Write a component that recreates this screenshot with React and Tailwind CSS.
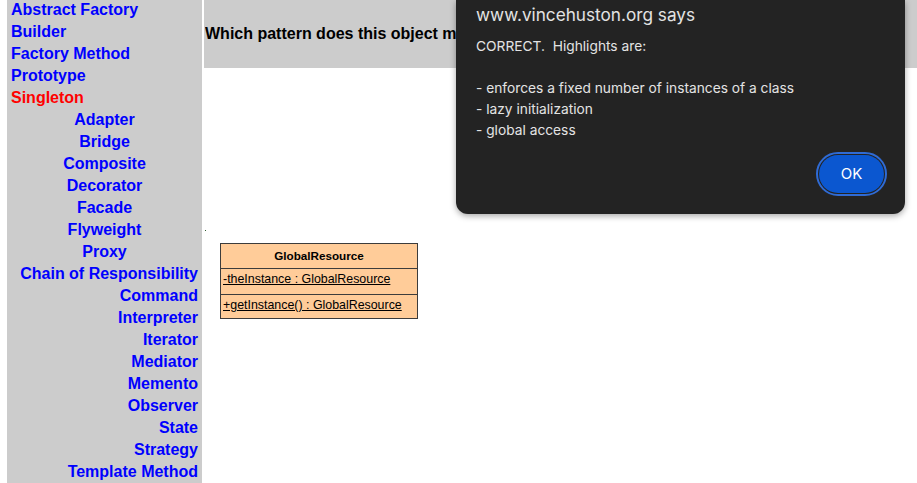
const creational = ["Abstract Factory", "Builder", "Factory Method", "Prototype", "Singleton"];
const structural = ["Adapter", "Bridge", "Composite", "Decorator", "Facade", "Flyweight", "Proxy"];
const behavioral = [
  "Chain of Responsibility",
  "Command",
  "Interpreter",
  "Iterator",
  "Mediator",
  "Memento",
  "Observer",
  "State",
  "Strategy",
  "Template Method",
];

function NavLink({ label, align, active }) {
  return (
    <div className={`h-[22px] leading-[22px] ${align}`}>
      <a href="#" className={`font-bold text-[16px] ${active ? "text-[#ff0000]" : "text-[#0000ff]"}`}>
        {label}
      </a>
    </div>
  );
}

function UmlClass() {
  return (
    <div className="w-[198px] border border-[#3c3c3c] bg-[#ffcc99] text-black" style={{ fontFamily: "Liberation Sans, Arial, sans-serif" }}>
      <div className="h-[25px] flex items-center justify-center font-bold text-[11.7px] border-b border-[#3c3c3c]">GlobalResource</div>
      <div className="h-[26px] pl-[2px] pt-[1px] text-[12.4px] border-b border-[#3c3c3c]">
        <span className="underline">-theInstance : GlobalResource</span>
      </div>
      <div className="h-[23px] pl-[2px] pt-[1px] text-[12.4px]">
        <span className="underline">+getInstance() : GlobalResource</span>
      </div>
    </div>
  );
}

function AlertDialog() {
  return (
    <div
      className="absolute left-[456px] top-0 w-[449px] h-[214px] bg-[#232323] rounded-b-[12px] shadow-[0_2px_6px_rgba(0,0,0,0.35)] text-[#e3e3e3]"
      style={{ fontFamily: "Inter, Roboto, sans-serif" }}
    >
      <div className="pl-[20px] pt-[3px] text-[17.2px] leading-[24px]">www.vincehuston.org says</div>
      <div className="pl-[20px] pt-[9px] text-[13.75px] leading-[21px]">
        <div>CORRECT.&nbsp; Highlights are:</div>
        <div>&nbsp;</div>
        <div>- enforces a fixed number of instances of a class</div>
        <div>- lazy initialization</div>
        <div>- global access</div>
      </div>
      <div className="absolute right-[21px] bottom-[21px]">
        <button className="w-[65px] h-[38px] rounded-full bg-[#0b57d0] text-white text-[15px] outline-2 outline-offset-1 outline-[#2f6bd5]">
          OK
        </button>
      </div>
    </div>
  );
}

export default function App() {
  return (
    <div className="relative w-[917px] h-[483px] overflow-hidden bg-white" style={{ fontFamily: "Liberation Sans, Arial, sans-serif" }}>
      <div className="flex h-full">
        {/* left navigation */}
        <div className="ml-[7px] w-[195px] shrink-0 bg-[#cccccc] h-full">
          <div className="-mt-[1px]">
            {creational.map((c) => (
              <NavLink key={c} label={c} align="text-left pl-[4px]" active={c === "Singleton"} />
            ))}
            {structural.map((c) => (
              <NavLink key={c} label={c} align="text-center" />
            ))}
            {behavioral.map((c) => (
              <NavLink key={c} label={c} align="text-right pr-[4px]" />
            ))}
          </div>
        </div>

        {/* main */}
        <div className="ml-[2px] flex-1">
          <div className="h-[68px] bg-[#cccccc] flex items-center pl-[1px]">
            <div className="w-[251px] overflow-hidden whitespace-nowrap font-bold text-[16px] text-black">
              Which pattern does this object model demonstrate?
            </div>
          </div>
          <div className="mt-[162px] ml-[1px] w-[1px] h-[1px] bg-[#2d5a2d]"></div>
          <div className="mt-[12px] ml-[16px]">
            <UmlClass />
          </div>
        </div>
      </div>

      <AlertDialog />
    </div>
  );
}
